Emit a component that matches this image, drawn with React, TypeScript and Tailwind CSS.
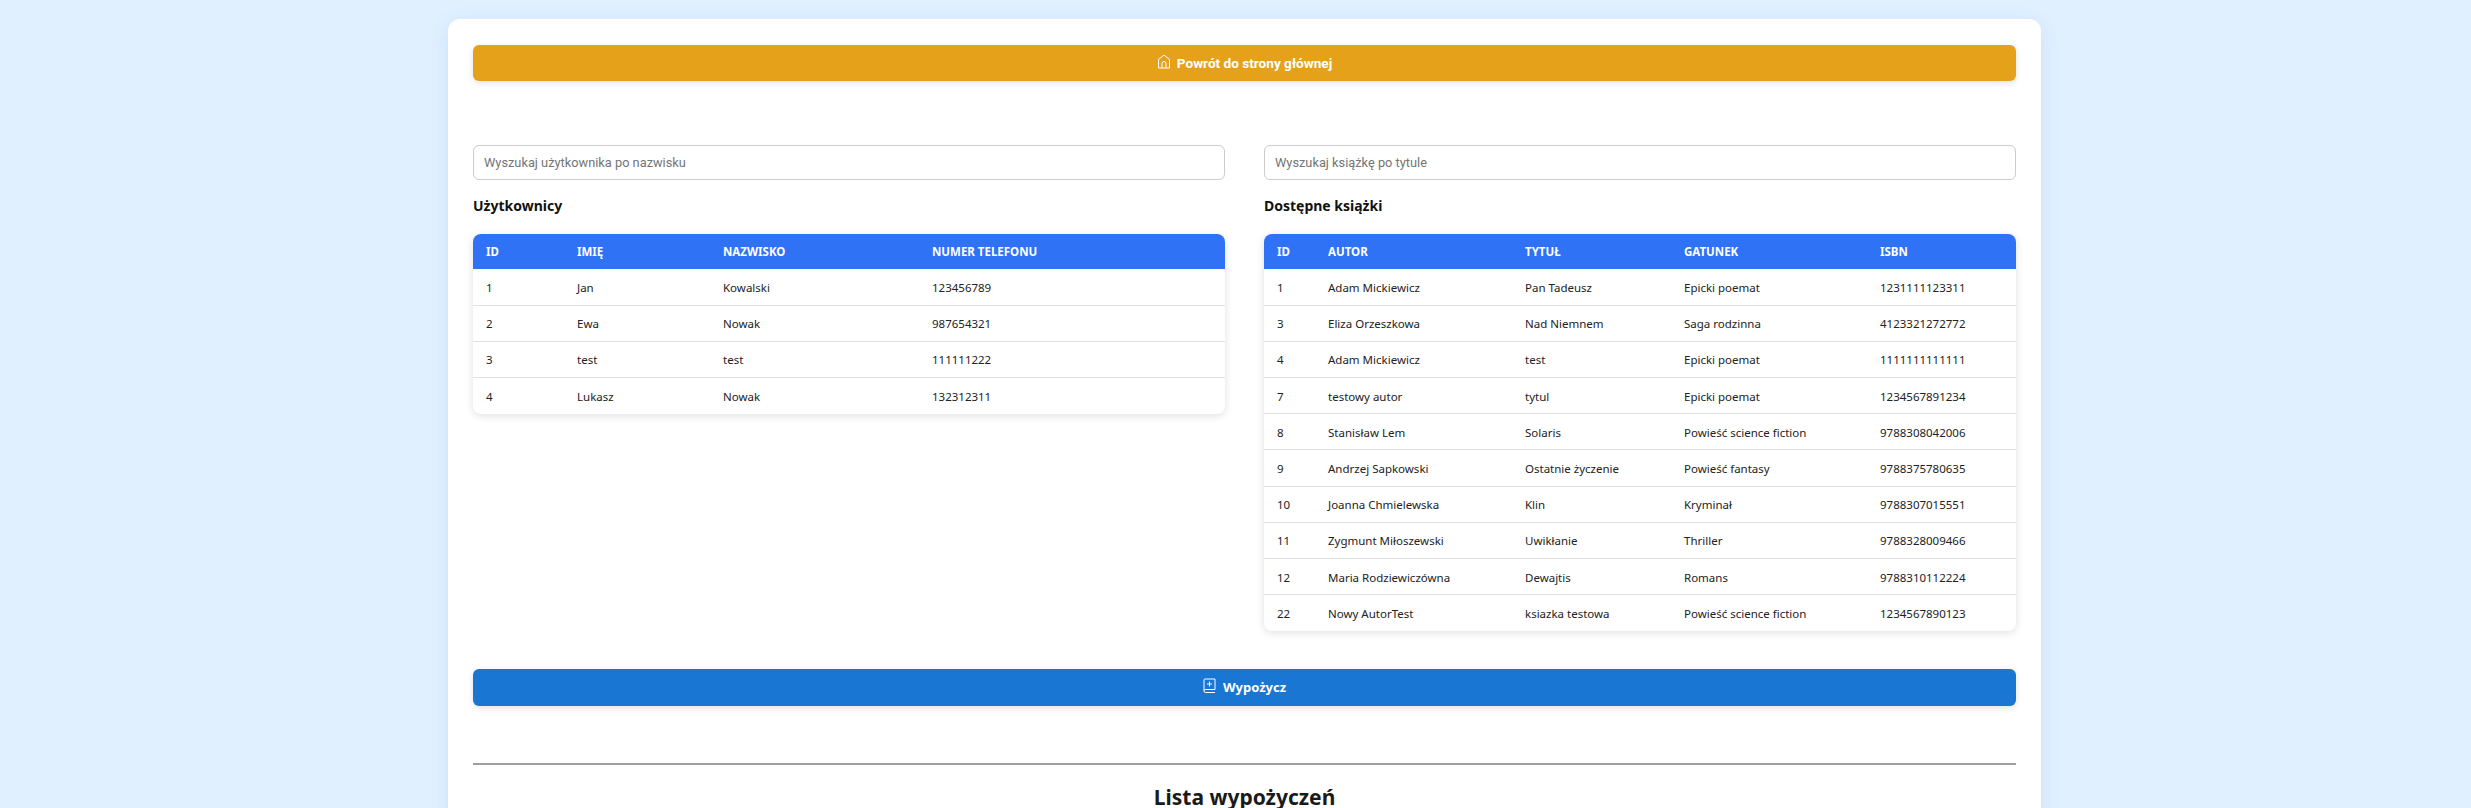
const users = [
  ["1", "Jan", "Kowalski", "123456789"],
  ["2", "Ewa", "Nowak", "987654321"],
  ["3", "test", "test", "111111222"],
  ["4", "Lukasz", "Nowak", "132312311"],
];
const books = [
  ["1", "Adam Mickiewicz", "Pan Tadeusz", "Epicki poemat", "1231111123311"],
  ["3", "Eliza Orzeszkowa", "Nad Niemnem", "Saga rodzinna", "4123321272772"],
  ["4", "Adam Mickiewicz", "test", "Epicki poemat", "1111111111111"],
  ["7", "testowy autor", "tytul", "Epicki poemat", "1234567891234"],
  ["8", "Stanisław Lem", "Solaris", "Powieść science fiction", "9788308042006"],
  ["9", "Andrzej Sapkowski", "Ostatnie życzenie", "Powieść fantasy", "9788375780635"],
  ["10", "Joanna Chmielewska", "Klin", "Kryminał", "9788307015551"],
  ["11", "Zygmunt Miłoszewski", "Uwikłanie", "Thriller", "9788328009466"],
  ["12", "Maria Rodziewiczówna", "Dewajtis", "Romans", "9788310112224"],
  ["22", "Nowy AutorTest", "ksiazka testowa", "Powieść science fiction", "1234567890123"],
];

function DataTable({ head, rows, widths }: { head: string[]; rows: string[][]; widths: string[] }) {
  return (
    <div className="rounded-lg overflow-hidden bg-white shadow-[0_2px_8px_rgba(0,0,0,0.12)]">
      <table className="w-full border-collapse table-fixed text-[11.5px] leading-[18px]">
        <colgroup>
          {widths.map((w) => (
            <col key={w} className={w} />
          ))}
        </colgroup>
        <thead>
          <tr className="h-[35px] bg-[#2f72f5] text-white">
            {head.map((h) => (
              <th key={h} className="px-[13px] text-left font-bold uppercase">
                {h}
              </th>
            ))}
          </tr>
        </thead>
        <tbody className="text-[#222222]">
          {rows.map((r) => (
            <tr key={r[0]} className="h-[36.2px] border-b border-[#e2e2e2] last:border-b-0">
              {r.map((c, i) => (
                <td key={i} className="px-[13px] pt-[2px]">
                  {c}
                </td>
              ))}
            </tr>
          ))}
        </tbody>
      </table>
    </div>
  );
}

function Column({ placeholder, title, children }: { placeholder: string; title: string; children: React.ReactNode }) {
  return (
    <div className="flex-1 min-w-0">
      <input
        placeholder={placeholder}
        className="block w-full h-[35px] px-[10px] rounded-md border border-[#cccccc] bg-white text-[12.8px] font-['Roboto',sans-serif] placeholder:text-[#757575]"
      />
      <h3 className="mt-[15px] mb-[17px] h-[22px] text-[14px] leading-[22px] font-bold text-[#111111]">{title}</h3>
      {children}
    </div>
  );
}

export default function App() {
  return (
    <div className="min-h-screen h-[808px] overflow-hidden bg-[#e0f0fe] font-['Noto_Sans',sans-serif]">
      <div className="ml-[448px] mt-0 pt-[19px] w-[1593px]">
        <div className="rounded-xl bg-white px-[25px] pt-[26px] pb-[40px] shadow-[0_4px_20px_rgba(0,100,200,0.1)]">
          <button className="flex w-full h-[36px] items-center justify-center gap-[6px] rounded-md bg-[#e6a11a] text-[13.6px] font-bold text-white font-['Roboto',sans-serif] shadow-[0_2px_6px_rgba(0,0,0,0.12)]">
            <svg width="14" height="15" viewBox="0 0 14 15" fill="none" stroke="currentColor" strokeWidth="1" className="-mt-[3px]">
              <path d="M1.5 14V5.5L7 1l5.5 4.5V14z" />
              <path d="M5 14V9.5a2 2 0 0 1 4 0V14" />
            </svg>
            Powrót do strony głównej
          </button>
          <div className="mt-[64px] flex gap-[39px]">
            <Column placeholder="Wyszukaj użytkownika po nazwisku" title="Użytkownicy">
              <DataTable
                head={["ID", "Imię", "Nazwisko", "Numer telefonu"]}
                rows={users}
                widths={["w-[91px]", "w-[146px]", "w-[209px]", "w-auto"]}
              />
            </Column>
            <Column placeholder="Wyszukaj książkę po tytule" title="Dostępne książki">
              <DataTable
                head={["ID", "Autor", "Tytuł", "Gatunek", "ISBN"]}
                rows={books}
                widths={["w-[51px]", "w-[197px]", "w-[159px]", "w-[196px]", "w-auto"]}
              />
            </Column>
          </div>
          <button className="mt-[38px] flex w-full h-[37px] items-center justify-center gap-[7px] rounded-md bg-[#1976d2] text-[13px] font-bold text-white shadow-[0_2px_6px_rgba(0,0,0,0.12)]">
            <svg width="13" height="15" viewBox="0 0 13 15" fill="none" stroke="currentColor" strokeWidth="1" className="-mt-[3px]">
              <path d="M1 12.5V2a1 1 0 0 1 1-1h10v10.5H2.5a1.5 1.5 0 0 0 0 3H12" />
              <path d="M6.5 3.5v5M4 6h5" />
            </svg>
            Wypożycz
          </button>
          <hr className="mt-[57px] border-0 border-t-2 border-[#9e9e9e]" />
          <h2 className="mt-[17px] text-center text-[21px] leading-[30px] font-bold text-[#1a1a1a]">Lista wypożyczeń</h2>
        </div>
      </div>
    </div>
  );
}
